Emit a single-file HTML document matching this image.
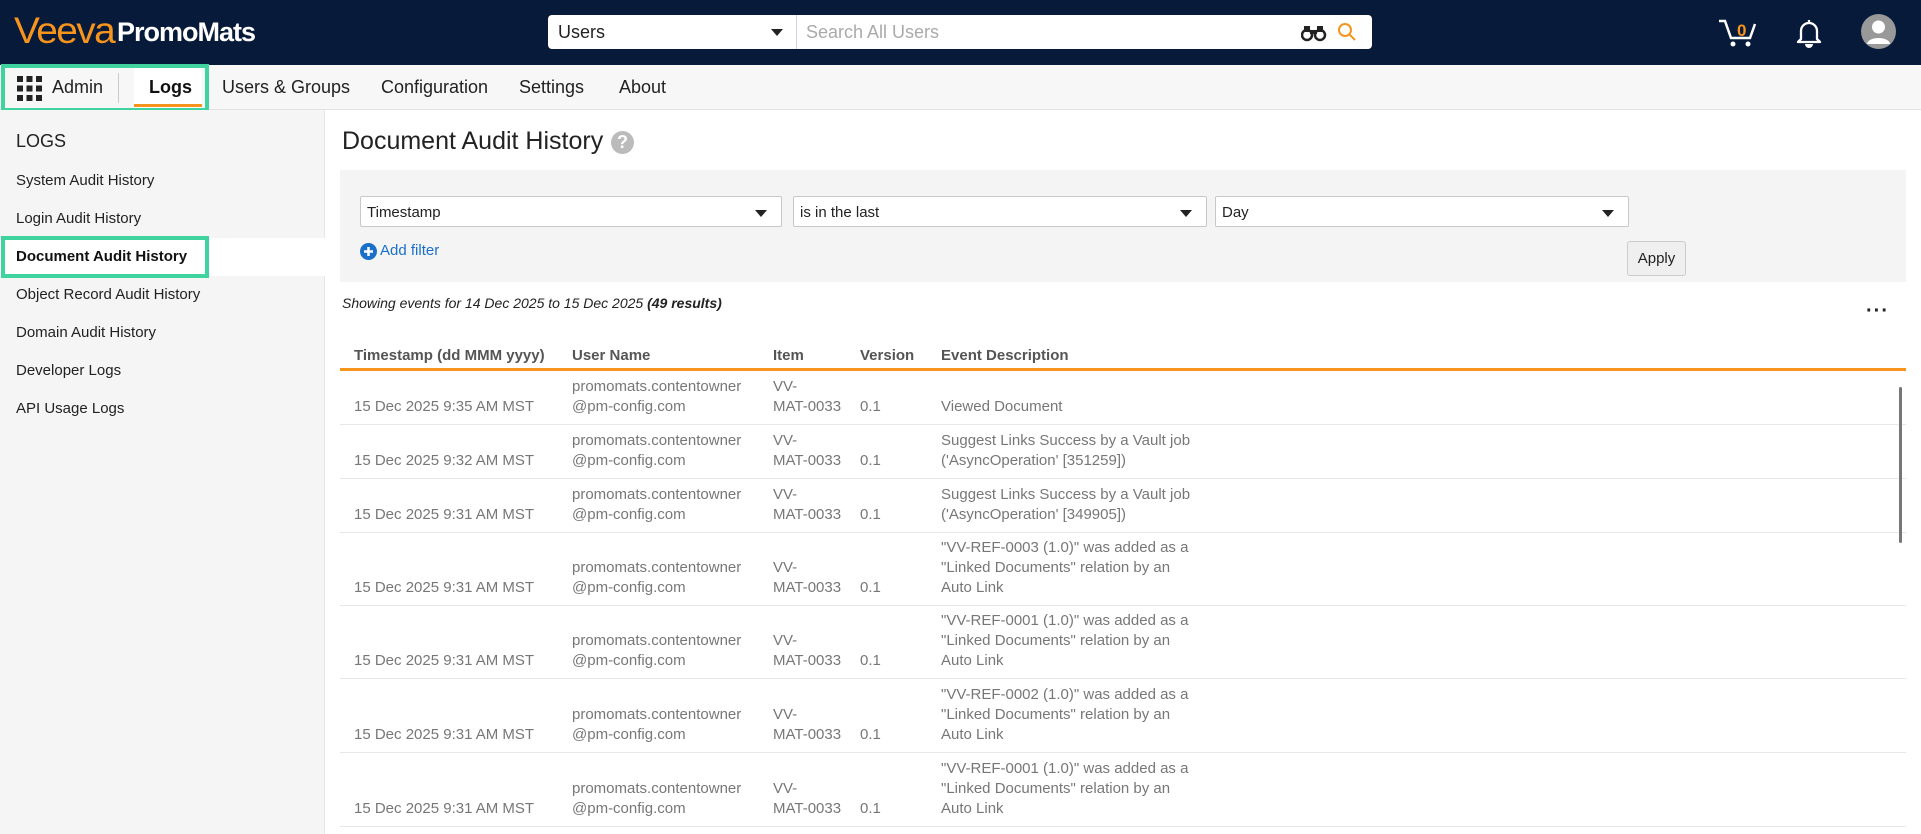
<!DOCTYPE html>
<html><head><meta charset="utf-8"><style>
*{box-sizing:border-box;margin:0;padding:0}
body{width:1921px;height:834px;overflow:hidden;font-family:"Liberation Sans",Arial,sans-serif;background:#fff;position:relative;color:#222}
.abs{position:absolute}
#hdr{left:0;top:0;width:1921px;height:65px;background:#071a3a}
#nav{left:0;top:65px;width:1921px;height:45px;background:#f7f7f7;border-bottom:1px solid #e2e2e2}
.nv{position:absolute;top:77px;font-size:18px;color:#222}
#side{left:0;top:110px;width:325px;height:724px;background:#f5f5f5;border-right:1px solid #e6e6e6}
.si{position:absolute;left:16px;font-size:15px;color:#222}
.sel{position:absolute;top:196px;height:31px;background:#fff;border:1px solid #c8c8c8;border-radius:2px;font-size:15px;padding:7px 6px;color:#222}
.sel:after{content:"";position:absolute;right:14px;top:13px;border-left:6px solid transparent;border-right:6px solid transparent;border-top:7px solid #222}
.th{position:absolute;top:347px;font-size:15px;font-weight:bold;color:#555}
.row{position:absolute;left:340px;width:1566px;border-bottom:1px solid #e8e8e8}
.c{position:absolute;bottom:7px;font-size:15px;line-height:20px;color:#777}
</style></head><body>
<div id="hdr" class="abs"></div>
<div class="abs" style="left:14px;top:11px;font-size:37px;color:#f7941d;letter-spacing:-1.5px;line-height:40px;transform:scaleX(1.05);transform-origin:left">Veeva</div>
<div class="abs" style="left:117px;top:16px;font-size:27px;font-weight:bold;color:#fff;letter-spacing:-1px;line-height:32px">PromoMats</div>
<div class="abs" style="left:548px;top:15px;width:824px;height:34px;background:#fff;border-radius:4px"></div>
<div class="abs" style="left:558px;top:22px;font-size:18px;color:#222">Users</div>
<div class="abs" style="left:771px;top:29px;border-left:6px solid transparent;border-right:6px solid transparent;border-top:7px solid #222"></div>
<div class="abs" style="left:796px;top:15px;width:1px;height:34px;background:#d0d0ee"></div>
<div class="abs" style="left:806px;top:22px;font-size:18px;color:#aaa">Search All Users</div>
<svg class="abs" style="left:1301px;top:24px" width="26" height="18" viewBox="0 0 26 18"><circle cx="6" cy="11" r="5" fill="none" stroke="#222" stroke-width="2.5"/><circle cx="19" cy="11" r="5" fill="none" stroke="#222" stroke-width="2.5"/><rect x="3" y="2" width="6" height="6" fill="#222"/><rect x="16" y="2" width="6" height="6" fill="#222"/><rect x="9" y="6" width="7" height="4" fill="#222"/></svg>
<svg class="abs" style="left:1337px;top:22px" width="20" height="20" viewBox="0 0 20 20"><circle cx="8" cy="8" r="6" fill="none" stroke="#f7941d" stroke-width="2"/><line x1="12.5" y1="12.5" x2="18" y2="18" stroke="#f7941d" stroke-width="2"/></svg>
<svg class="abs" style="left:1717px;top:18px" width="42" height="30" viewBox="0 0 42 30"><path d="M2 3 H8 L14 20 H33 L38 6" fill="none" stroke="#fff" stroke-width="2.5"/><circle cx="16" cy="26" r="2.5" fill="#fff"/><circle cx="31" cy="26" r="2.5" fill="#fff"/><text x="20" y="18" font-family="Liberation Sans" font-size="17" font-weight="bold" fill="#f7941d">0</text></svg>
<svg class="abs" style="left:1796px;top:18px" width="26" height="30" viewBox="0 0 26 30"><path d="M13 2 V4 M5 21 V13 A8 8 0 0 1 21 13 V21 L24 24 H2 Z" fill="none" stroke="#fff" stroke-width="2.3" stroke-linejoin="round"/><path d="M9 26 A4 4 0 0 0 17 26 Z" fill="#fff"/></svg>
<svg class="abs" style="left:1861px;top:14px" width="35" height="35" viewBox="0 0 35 35"><circle cx="17.5" cy="17.5" r="17.5" fill="#999"/><circle cx="17.5" cy="13" r="6.5" fill="#fff"/><path d="M6 30 C7 22 28 22 29 30 Z" fill="#fff"/></svg>

<div id="nav" class="abs"></div>
<svg class="abs" style="left:17px;top:76px" width="25" height="25" viewBox="0 0 25 25" fill="#222"><rect x="0" y="0" width="6" height="6"/><rect x="9.5" y="0" width="6" height="6"/><rect x="19" y="0" width="6" height="6"/><rect x="0" y="9.5" width="6" height="6"/><rect x="9.5" y="9.5" width="6" height="6"/><rect x="19" y="9.5" width="6" height="6"/><rect x="0" y="19" width="6" height="6"/><rect x="9.5" y="19" width="6" height="6"/><rect x="19" y="19" width="6" height="6"/></svg>
<div class="nv" style="left:52px">Admin</div>
<div class="abs" style="left:118px;top:73px;width:1px;height:30px;background:#ccc"></div>
<div class="abs" style="left:134px;top:68px;width:68px;height:40px;background:#fff"></div>
<div class="nv" style="left:149px;font-weight:bold;color:#111">Logs</div>
<div class="abs" style="left:134px;top:104px;width:68px;height:3px;background:#f7941d"></div>
<div class="nv" style="left:222px">Users &amp; Groups</div>
<div class="nv" style="left:381px">Configuration</div>
<div class="nv" style="left:519px">Settings</div>
<div class="nv" style="left:619px">About</div>
<div class="abs" style="left:1px;top:64px;width:208px;height:48px;border:4px solid #3fd3a0"></div>

<div id="side" class="abs"></div>
<div class="abs" style="left:16px;top:131px;font-size:18px;color:#222">LOGS</div>
<div class="si" style="top:172px">System Audit History</div>
<div class="si" style="top:210px">Login Audit History</div>
<div class="abs" style="left:0;top:238px;width:325px;height:38px;background:#fff"></div>
<div class="si" style="top:248px;font-weight:bold;color:#111">Document Audit History</div>
<div class="abs" style="left:1px;top:236px;width:208px;height:42px;border:4px solid #3fd3a0"></div>
<div class="si" style="top:286px">Object Record Audit History</div>
<div class="si" style="top:324px">Domain Audit History</div>
<div class="si" style="top:362px">Developer Logs</div>
<div class="si" style="top:400px">API Usage Logs</div>

<div class="abs" style="left:342px;top:127px;font-size:25px;color:#222">Document Audit History</div>
<div class="abs" style="left:611px;top:131px;width:23px;height:23px;border-radius:50%;background:#bbb;color:#fff;font-weight:bold;font-size:18px;text-align:center;line-height:23px">?</div>

<div class="abs" style="left:340px;top:170px;width:1566px;height:112px;background:#f4f4f4"></div>
<div class="sel" style="left:360px;width:422px">Timestamp</div>
<div class="sel" style="left:793px;width:414px">is in the last</div>
<div class="sel" style="left:1215px;width:414px">Day</div>
<svg class="abs" style="left:360px;top:243px" width="17" height="17" viewBox="0 0 17 17"><circle cx="8.5" cy="8.5" r="8.5" fill="#1a6fc9"/><path d="M8.5 4 V13 M4 8.5 H13" stroke="#fff" stroke-width="2.5"/></svg>
<div class="abs" style="left:380px;top:242px;font-size:15px;color:#1a6fc9">Add filter</div>
<div class="abs" style="left:1627px;top:241px;width:59px;height:35px;background:#efefef;border:1px solid #ccc;border-radius:3px;font-size:15px;text-align:center;line-height:33px;color:#222">Apply</div>

<div class="abs" style="left:342px;top:295px;font-size:14px;font-style:italic;color:#222">Showing events for 14 Dec 2025 to 15 Dec 2025 <b>(49 results)</b></div>
<div class="abs" style="left:1866px;top:300px;font-size:20px;font-weight:bold;color:#222;letter-spacing:1px">···</div>

<div class="th" style="left:354px">Timestamp (dd MMM yyyy)</div>
<div class="th" style="left:572px">User Name</div>
<div class="th" style="left:773px">Item</div>
<div class="th" style="left:860px">Version</div>
<div class="th" style="left:941px">Event Description</div>
<div class="abs" style="left:340px;top:368px;width:1566px;height:3px;background:#f7941d"></div>

<div class="row" style="top:371px;height:54px"><div class="c" style="left:14px">15 Dec 2025 9:35 AM MST</div><div class="c" style="left:232px">promomats.contentowner<br>@pm-config.com</div><div class="c" style="left:433px">VV-<br>MAT-0033</div><div class="c" style="left:520px">0.1</div><div class="c" style="left:601px;width:260px">Viewed Document</div></div>
<div class="row" style="top:425px;height:54px"><div class="c" style="left:14px">15 Dec 2025 9:32 AM MST</div><div class="c" style="left:232px">promomats.contentowner<br>@pm-config.com</div><div class="c" style="left:433px">VV-<br>MAT-0033</div><div class="c" style="left:520px">0.1</div><div class="c" style="left:601px;width:260px">Suggest Links Success by a Vault job<br>('AsyncOperation' [351259])</div></div>
<div class="row" style="top:479px;height:54px"><div class="c" style="left:14px">15 Dec 2025 9:31 AM MST</div><div class="c" style="left:232px">promomats.contentowner<br>@pm-config.com</div><div class="c" style="left:433px">VV-<br>MAT-0033</div><div class="c" style="left:520px">0.1</div><div class="c" style="left:601px;width:260px">Suggest Links Success by a Vault job<br>('AsyncOperation' [349905])</div></div>
<div class="row" style="top:533px;height:73px"><div class="c" style="left:14px">15 Dec 2025 9:31 AM MST</div><div class="c" style="left:232px">promomats.contentowner<br>@pm-config.com</div><div class="c" style="left:433px">VV-<br>MAT-0033</div><div class="c" style="left:520px">0.1</div><div class="c" style="left:601px;width:260px">"VV-REF-0003 (1.0)" was added as a<br>"Linked Documents" relation by an<br>Auto Link</div></div>
<div class="row" style="top:606px;height:73px"><div class="c" style="left:14px">15 Dec 2025 9:31 AM MST</div><div class="c" style="left:232px">promomats.contentowner<br>@pm-config.com</div><div class="c" style="left:433px">VV-<br>MAT-0033</div><div class="c" style="left:520px">0.1</div><div class="c" style="left:601px;width:260px">"VV-REF-0001 (1.0)" was added as a<br>"Linked Documents" relation by an<br>Auto Link</div></div>
<div class="row" style="top:679px;height:74px"><div class="c" style="left:14px">15 Dec 2025 9:31 AM MST</div><div class="c" style="left:232px">promomats.contentowner<br>@pm-config.com</div><div class="c" style="left:433px">VV-<br>MAT-0033</div><div class="c" style="left:520px">0.1</div><div class="c" style="left:601px;width:260px">"VV-REF-0002 (1.0)" was added as a<br>"Linked Documents" relation by an<br>Auto Link</div></div>
<div class="row" style="top:753px;height:74px"><div class="c" style="left:14px">15 Dec 2025 9:31 AM MST</div><div class="c" style="left:232px">promomats.contentowner<br>@pm-config.com</div><div class="c" style="left:433px">VV-<br>MAT-0033</div><div class="c" style="left:520px">0.1</div><div class="c" style="left:601px;width:260px">"VV-REF-0001 (1.0)" was added as a<br>"Linked Documents" relation by an<br>Auto Link</div></div>
<div class="abs" style="left:1899px;top:387px;width:3px;height:156px;background:#777;border-radius:2px"></div>
</body></html>
